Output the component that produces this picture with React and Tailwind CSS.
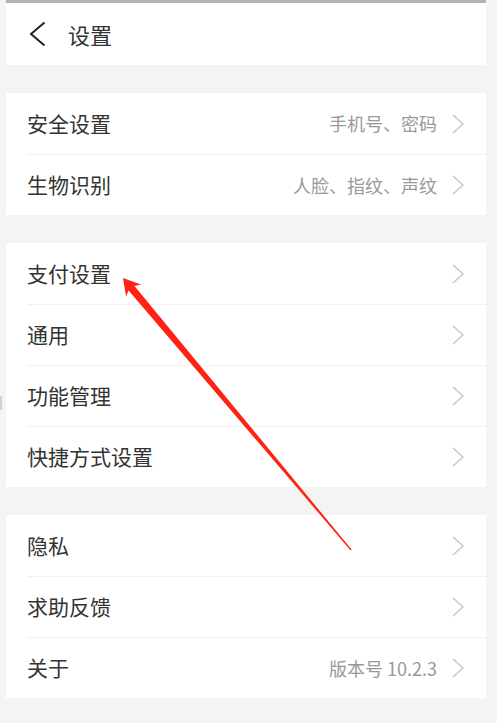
const sections = [
  [
    { label: "安全设置", value: "手机号、密码" },
    { label: "生物识别", value: "人脸、指纹、声纹" },
  ],
  [
    { label: "支付设置" },
    { label: "通用" },
    { label: "功能管理" },
    { label: "快捷方式设置" },
  ],
  [
    { label: "隐私" },
    { label: "求助反馈" },
    { label: "关于", value: "版本号 10.2.3" },
  ],
]

function Chevron() {
  return (
    <svg width="12" height="20" viewBox="0 0 12 20" fill="none">
      <path d="M1 1 L11 10 L1 19" stroke="#c6c6c6" strokeWidth="1.4" />
    </svg>
  )
}

function Row({ label, value, first }) {
  return (
    <div className={`ml-[21px] h-[61px] flex items-center pr-[22px] ${first ? "" : "border-t border-[#f0f0f0]"}`}>
      <span className="flex-1 text-[21px] text-[#333]">{label}</span>
      {value && <span className="text-[18px] text-[#999] mr-[15px]">{value}</span>}
      <Chevron />
    </div>
  )
}

export default function App() {
  return (
    <div
      className="relative min-h-[723px] bg-[#f4f4f4] pl-[6px] pr-[11px]"
      style={{ fontFamily: '"Noto Sans CJK SC", "Noto Sans", sans-serif' }}
    >
      <div className="h-[3px] bg-[#b3b3b3]" />
      <div className="h-[62px] bg-white flex items-center pl-[23px]">
        <svg width="17" height="26" viewBox="0 0 17 26" fill="none">
          <path d="M15.5 1.5 L2 13 L15.5 24.5" stroke="#222" strokeWidth="2" />
        </svg>
        <span className="ml-[22px] text-[22px] text-[#333]">设置</span>
      </div>

      {sections.map((rows, i) => (
        <div key={i} className="mt-[28px] bg-white">
          {rows.map((r, j) => (
            <Row key={r.label} {...r} first={j === 0} />
          ))}
        </div>
      ))}

      {/* left edge mark */}
      <div className="absolute left-0 top-[396px] w-[2px] h-[14px] bg-[#d0d0d0]" />

      {/* red annotation arrow */}
      <svg className="absolute left-0 top-0 pointer-events-none" width="497" height="723">
        <polygon
          points="123,278 141,284.5 134.5,286 351.6,549.6 350.6,550.4 128.6,290.5 126,296.5"
          fill="#ff2215"
        />
      </svg>
    </div>
  )
}
